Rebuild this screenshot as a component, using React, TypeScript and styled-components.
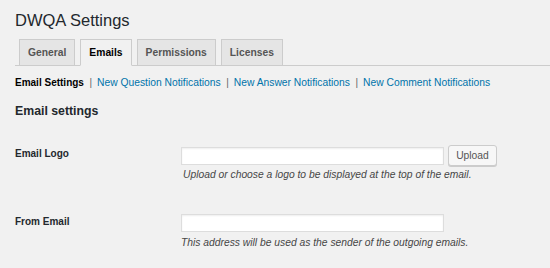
import React from "react";
import styled, { createGlobalStyle } from "styled-components";

const GlobalStyle = createGlobalStyle`
  html, body {
    margin: 0;
    padding: 0;
    background: #f1f1f1;
  }
  body {
    font-family: "Liberation Sans", Arial, sans-serif;
    color: #23282d;
  }
  * { box-sizing: border-box; }
`;

const Wrap = styled.div`
  padding: 0 0 0 15px;
  width: 550px;
  height: 268px;
  overflow: hidden;
`;

const Title = styled.h1`
  margin: 0;
  padding-top: 10px;
  font-size: 16.5px;
  line-height: 20px;
  font-weight: 400;
  color: #23282d;
`;

const TabBar = styled.nav`
  margin-top: 9px;
  display: flex;
  gap: 5px;
  padding-left: 4px;
  border-bottom: 1px solid #ccc;
`;

const Tab = styled.a<{ $active?: boolean }>`
  display: block;
  margin-bottom: -1px;
  padding: 1px 8px 0;
  line-height: 24px;
  font-size: 10.3px;
  font-weight: 700;
  text-decoration: none;
  border: 1px solid #ccc;
  border-bottom-color: ${(p) => (p.$active ? "#f1f1f1" : "#ccc")};
  background: ${(p) => (p.$active ? "#f1f1f1" : "#e5e5e5")};
  color: ${(p) => (p.$active ? "#000" : "#555")};
`;

const SubNav = styled.ul`
  list-style: none;
  margin: 8px 0 0;
  padding: 0;
  display: flex;
  align-items: baseline;
  line-height: 17px;
  white-space: nowrap;
`;

const SubItem = styled.li<{ $current?: boolean }>`
  font-size: ${(p) => (p.$current ? "10px" : "10.3px")};
  font-weight: ${(p) => (p.$current ? 700 : 400)};
  color: ${(p) => (p.$current ? "#000" : "#0073aa")};
`;

const Sep = styled.span`
  font-size: 10px;
  color: #666;
  padding: 0 5px 0 5.5px;
`;

const SectionTitle = styled.h2`
  margin: 12px 0 0;
  font-size: 12.3px;
  line-height: 16px;
  font-weight: 700;
  color: #23282d;
`;

const Form = styled.div`
  margin-top: 26px;
  display: flex;
  flex-direction: column;
  gap: 29.5px;
`;

const Row = styled.div`
  display: grid;
  grid-template-columns: 166px 1fr;
  align-items: start;
`;

const Label = styled.label`
  font-size: 10px;
  font-weight: 700;
  line-height: 17px;
  color: #23282d;
`;

const Field = styled.div`
  display: flex;
  flex-direction: column;
`;

const Controls = styled.div`
  display: flex;
  align-items: center;
  gap: 4px;
  height: 21px;
`;

const TextInput = styled.input`
  width: 263px;
  height: 18px;
  margin: 0;
  border: 1px solid #ddd;
  background: #fff;
  box-shadow: inset 0 1px 2px rgba(0, 0, 0, 0.07);
  outline: none;
  font-family: inherit;
`;

const Button = styled.button`
  width: 49px;
  height: 21px;
  margin: 0;
  padding: 0;
  border: 1px solid #ccc;
  border-radius: 3px;
  background: #f7f7f7;
  box-shadow: 0 1px 0 #ccc;
  color: #555;
  font-family: "Liberation Sans", Arial, sans-serif;
  font-size: 10.3px;
  line-height: 19px;
  text-align: center;
`;

const Description = styled.p<{ $indent?: number }>`
  margin: 1px 0 0;
  padding-left: ${(p) => p.$indent ?? 0}px;
  font-size: 10.3px;
  line-height: 16px;
  font-style: italic;
  color: #464646;
  white-space: nowrap;
`;

const tabs = ["General", "Emails", "Permissions", "Licenses"];
const subLinks = [
  "Email Settings",
  "New Question Notifications",
  "New Answer Notifications",
  "New Comment Notifications",
];

export default function App() {
  return (
    <>
      <GlobalStyle />
      <Wrap>
        <Title>DWQA Settings</Title>
        <TabBar>
          {tabs.map((t) => (
            <Tab key={t} $active={t === "Emails"}>
              {t}
            </Tab>
          ))}
        </TabBar>
        <SubNav>
          {subLinks.map((l, i) => (
            <React.Fragment key={l}>
              {i > 0 && <Sep>|</Sep>}
              <SubItem $current={i === 0}>{l}</SubItem>
            </React.Fragment>
          ))}
        </SubNav>
        <SectionTitle>Email settings</SectionTitle>
        <Form>
          <Row>
            <Label>Email Logo</Label>
            <Field>
              <Controls>
                <TextInput type="text" />
                <Button type="button">Upload</Button>
              </Controls>
              <Description $indent={2}>
                Upload or choose a logo to be displayed at the top of the email.
              </Description>
            </Field>
          </Row>
          <Row>
            <Label>From Email</Label>
            <Field>
              <Controls>
                <TextInput type="text" />
              </Controls>
              <Description>
                This address will be used as the sender of the outgoing emails.
              </Description>
            </Field>
          </Row>
        </Form>
      </Wrap>
    </>
  );
}
